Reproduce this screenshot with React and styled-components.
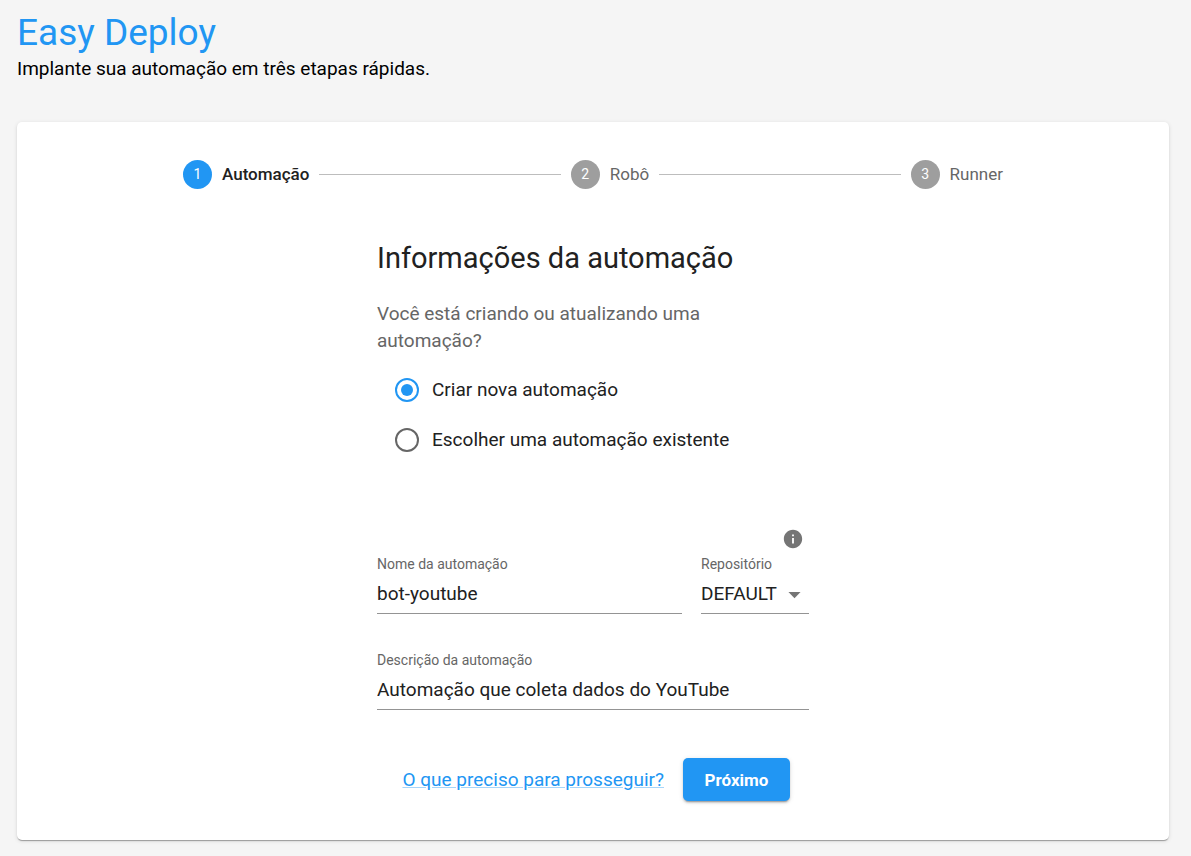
import React, { useState } from "react";
import styled, { createGlobalStyle } from "styled-components";

const color = {
  primary: "#2196f3",
  text: "#212121",
  muted: "#666666",
  icon: "#757575",
  disabled: "#9e9e9e",
  line: "#bdbdbd",
  fieldLine: "#949494",
};

const GlobalStyle = createGlobalStyle`
  *, *::before, *::after { box-sizing: border-box; }
  body {
    margin: 0;
    background: #f5f5f5;
    color: #000;
    font-family: Roboto, "Liberation Sans", sans-serif;
    font-size: 19px;
    line-height: 28px;
  }
  h1, h2, p, ol, fieldset, legend { margin: 0; padding: 0; }
  fieldset { border: 0; min-width: 0; }
  input, select, button { font: inherit; color: inherit; margin: 0; }
`;

const Page = styled.div`
  padding: 11px 22px 16px 17px;
`;

const Title = styled.h1`
  color: ${color.primary};
  font-size: 37px;
  font-weight: 400;
  line-height: 44px;
`;

const Card = styled.main`
  margin-top: 39px;
  padding: 38px 24px 39px;
  background: #fff;
  border-radius: 5px;
  box-shadow: 0 2px 1px -1px rgba(0, 0, 0, 0.2), 0 1px 1px rgba(0, 0, 0, 0.14),
    0 1px 4px rgba(0, 0, 0, 0.12);
`;

const Stepper = styled.ol`
  display: flex;
  align-items: center;
  gap: 10px;
  max-width: 820px;
  margin: 0 auto;
  list-style: none;
`;

const Step = styled.li`
  display: flex;
  align-items: center;
  gap: 10px;
  flex: ${(p) => (p.$last ? "0 0 auto" : "1 1 auto")};
  color: ${(p) => (p.$active ? color.text : color.muted)};
  font-size: 17px;
  font-weight: ${(p) => (p.$active ? 500 : 400)};
  line-height: 25px;

  &:not(:last-child)::after {
    content: "";
    flex: 1;
    height: 1px;
    background: ${color.line};
  }
`;

const StepNumber = styled.span`
  display: grid;
  place-items: center;
  width: 29px;
  height: 29px;
  border-radius: 50%;
  background: ${(p) => (p.$active ? color.primary : color.disabled)};
  color: #fff;
  font-size: 14px;
  font-weight: 400;
`;

const Form = styled.form`
  max-width: 432px;
  margin: 51px auto 0;
  color: ${color.text};
`;

const SectionTitle = styled.h2`
  font-size: 29px;
  font-weight: 400;
  line-height: 36px;
`;

const Choice = styled.fieldset`
  margin-top: 24px;
`;

const Question = styled.legend`
  max-width: 360px;
  color: ${color.muted};
  line-height: 27px;
`;

const Options = styled.div`
  display: grid;
  padding: 11px 0 0 18px;
`;

const Option = styled.label`
  display: flex;
  align-items: center;
  gap: 13px;
  height: 50px;
`;

const Radio = styled.input`
  appearance: none;
  display: grid;
  place-items: center;
  width: 24px;
  height: 24px;
  border: 2px solid ${color.muted};
  border-radius: 50%;

  &:checked { border-color: ${color.primary}; }
  &:checked::after {
    content: "";
    width: 12px;
    height: 12px;
    border-radius: 50%;
    background: ${color.primary};
  }
`;

const FieldRow = styled.div`
  display: grid;
  grid-template-columns: 1fr 108px;
  align-items: end;
  gap: 19px;
  margin-top: 63px;
`;

const Field = styled.div`
  display: flex;
  flex-direction: column;
  margin-top: ${(p) => (p.$spaced ? "36px" : "0")};
`;

const Label = styled.label`
  color: ${color.muted};
  font-size: 14px;
  line-height: 20px;
`;

const controlStyle = `
  width: 100%;
  height: 40px;
  padding: 0;
  border: 0;
  border-bottom: 1px solid ${color.fieldLine};
  border-radius: 0;
  background: transparent;
  outline: none;
`;

const TextInput = styled.input`
  ${controlStyle}
`;

const Select = styled.select`
  ${controlStyle}
  appearance: none;
`;

const SelectBox = styled.div`
  position: relative;
  display: flex;
`;

const Arrow = styled.svg`
  position: absolute;
  right: 0;
  top: 6px;
  width: 29px;
  height: 29px;
  fill: ${color.icon};
  pointer-events: none;
`;

const Info = styled.button`
  display: grid;
  align-self: end;
  margin-right: 5px;
  margin-bottom: 4px;
  padding: 0;
  border: 0;
  background: none;

  svg {
    width: 22px;
    height: 22px;
    fill: ${color.icon};
  }
`;

const Actions = styled.div`
  display: flex;
  align-items: center;
  justify-content: flex-end;
  gap: 19px;
  margin-top: 48px;
  padding: 0 19px;
`;

const HelpLink = styled.a`
  color: ${color.primary};
  text-decoration: underline;
  text-decoration-color: rgba(33, 150, 243, 0.4);
`;

const Next = styled.button`
  min-width: 107px;
  height: 43px;
  padding: 0 20px;
  border: 0;
  border-radius: 5px;
  background: ${color.primary};
  color: #fff;
  font-size: 17px;
  font-weight: 700;
  box-shadow: 0 3px 1px -2px rgba(0, 0, 0, 0.2), 0 2px 2px rgba(0, 0, 0, 0.14),
    0 1px 5px rgba(0, 0, 0, 0.12);
`;

const steps = ["Automação", "Robô", "Runner"];

export default function App() {
  const [mode, setMode] = useState("new");
  const [name, setName] = useState("bot-youtube");
  const [description, setDescription] = useState(
    "Automação que coleta dados do YouTube"
  );

  return (
    <>
      <GlobalStyle />
      <Page>
        <header>
          <Title>Easy Deploy</Title>
          <p>Implante sua automação em três etapas rápidas.</p>
        </header>
        <Card>
          <Stepper>
            {steps.map((label, i) => (
              <Step key={label} $active={i === 0} $last={i === steps.length - 1}>
                <StepNumber $active={i === 0}>{i + 1}</StepNumber>
                <span>{label}</span>
              </Step>
            ))}
          </Stepper>
          <Form onSubmit={(e) => e.preventDefault()}>
            <SectionTitle>Informações da automação</SectionTitle>
            <Choice>
              <Question>Você está criando ou atualizando uma automação?</Question>
              <Options>
                <Option>
                  <Radio
                    type="radio"
                    name="mode"
                    checked={mode === "new"}
                    onChange={() => setMode("new")}
                  />
                  Criar nova automação
                </Option>
                <Option>
                  <Radio
                    type="radio"
                    name="mode"
                    checked={mode === "existing"}
                    onChange={() => setMode("existing")}
                  />
                  Escolher uma automação existente
                </Option>
              </Options>
            </Choice>
            <FieldRow>
              <Field>
                <Label htmlFor="name">Nome da automação</Label>
                <TextInput
                  id="name"
                  value={name}
                  onChange={(e) => setName(e.target.value)}
                />
              </Field>
              <Field>
                <Info type="button" aria-label="Sobre o repositório">
                  <svg viewBox="0 0 24 24">
                    <path d="M12 2C6.48 2 2 6.48 2 12s4.48 10 10 10 10-4.48 10-10S17.52 2 12 2zm1 15h-2v-6h2v6zm0-8h-2V7h2v2z" />
                  </svg>
                </Info>
                <Label htmlFor="repository">Repositório</Label>
                <SelectBox>
                  <Select id="repository" defaultValue="DEFAULT">
                    <option>DEFAULT</option>
                  </Select>
                  <Arrow viewBox="0 0 24 24">
                    <path d="M7 10l5 5 5-5z" />
                  </Arrow>
                </SelectBox>
              </Field>
            </FieldRow>
            <Field $spaced>
              <Label htmlFor="description">Descrição da automação</Label>
              <TextInput
                id="description"
                value={description}
                onChange={(e) => setDescription(e.target.value)}
              />
            </Field>
            <Actions>
              <HelpLink href="#ajuda">O que preciso para prosseguir?</HelpLink>
              <Next type="submit">Próximo</Next>
            </Actions>
          </Form>
        </Card>
      </Page>
    </>
  );
}
